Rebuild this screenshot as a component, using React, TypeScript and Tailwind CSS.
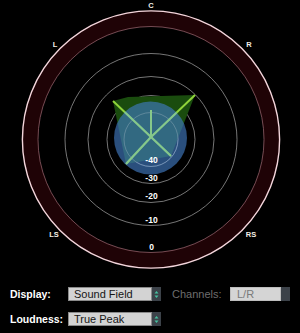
import React from "react";

const CX = 151;
const CY = 139.5;

function Field() {
  const rings = [27, 44, 63, 86];
  const labels: [string, number][] = [
    ["-40", 163],
    ["-30", 180.5],
    ["-20", 198.5],
    ["-10", 222.5],
    ["0", 249.5],
  ];
  const ends: [number, number][] = [
    [113, 101],
    [195, 95],
    [126, 164],
    [171, 156],
    [151, 110],
  ];
  return (
    <svg width={300} height={283} viewBox="0 0 300 283" className="block">
      <defs>
        <clipPath id="blueclip">
          <circle cx={150.5} cy={138} r={36.5} />
        </clipPath>
      </defs>
      <circle cx={CX} cy={CY} r={121} fill="none" stroke="#1f0306" strokeWidth={16} />
      <circle cx={CX} cy={CY} r={128.6} fill="none" stroke="#f3d6dc" strokeWidth={1.4} />
      <circle cx={CX} cy={CY} r={113} fill="none" stroke="#a06c76" strokeWidth={0.7} />
      {rings.map((r) => (
        <circle key={r} cx={CX} cy={CY} r={r} fill="none" stroke="#a8a8a8" strokeWidth={0.7} />
      ))}
      <polygon points="113,101 128,97 195,95 171,156 126,164" fill="#1a4c0e" />
      {ends.map(([x, y], i) => (
        <line key={i} x1={CX} y1={137} x2={x} y2={y} stroke="#8fd33a" strokeWidth={2} />
      ))}
      <circle cx={150.5} cy={138} r={36.5} fill="rgba(64,120,190,0.66)" />
      <circle cx={CX} cy={CY} r={27} fill="none" stroke="rgba(190,200,210,0.4)" strokeWidth={0.8} />
      <g clipPath="url(#blueclip)">
        {ends.map(([x, y], i) => (
          <line key={i} x1={CX} y1={137} x2={x} y2={y} stroke="#86c88a" strokeWidth={2} />
        ))}
      </g>
      {labels.map(([t, y]) => (
        <text
          key={t}
          x={151.5}
          y={y}
          textAnchor="middle"
          fill="#ffffff"
          fontSize={8.5}
          fontWeight="bold"
          fontFamily="'Liberation Sans', Arial, sans-serif"
        >
          {t}
        </text>
      ))}
      {(
        [
          ["C", 151, 7.5],
          ["L", 55, 47],
          ["R", 249, 47],
          ["LS", 54, 237],
          ["RS", 251, 237],
        ] as [string, number, number][]
      ).map(([t, x, y]) => (
        <text
          key={t}
          x={x}
          y={y}
          textAnchor="middle"
          fill="#f4f0e6"
          fontSize={7.5}
          fontWeight="bold"
          fontFamily="'Liberation Sans', Arial, sans-serif"
        >
          {t}
        </text>
      ))}
    </svg>
  );
}

function Arrows() {
  return (
    <svg width={5} height={9} viewBox="0 0 5 9">
      <polygon points="2.5,1 4.5,3.5 0.5,3.5" fill="#46c1a0" />
      <polygon points="2.5,8 4.5,5.5 0.5,5.5" fill="#46c1a0" />
    </svg>
  );
}

function Select({ text }: { text: string }) {
  return (
    <div className="flex h-[14px] w-[93px]">
      <div className="flex flex-1 items-center border border-[#8a8a8a] bg-[#d3d3d3] pl-[5px] text-[11px] leading-none text-[#151515]">
        {text}
      </div>
      <div className="flex w-[9px] items-center justify-center bg-[#3c4249]">
        <Arrows />
      </div>
    </div>
  );
}

export default function App() {
  return (
    <div
      className="h-[333px] w-[300px] overflow-hidden bg-black"
      style={{ fontFamily: "'Liberation Sans', Arial, sans-serif" }}
    >
      <Field />
      <div className="flex flex-col gap-[11px] pt-[4px]">
        <div className="flex h-[14px] items-center pl-[10px]">
          <div className="w-[58px] shrink-0 text-[10.5px] font-bold leading-none text-white">Display:</div>
          <Select text="Sound Field" />
          <div className="ml-[11px] w-[58px] text-[11px] leading-none text-[#6e6e6e]">Channels:</div>
          <div className="flex h-[14px] w-[60px]">
            <div className="flex flex-1 items-center border border-[#bdbdbd] bg-[#d5d5d5] pl-[6px] text-[11px] leading-none text-[#7a7a7a]">
              L/R
            </div>
            <div className="w-[9px] bg-[#3c4249]" />
          </div>
        </div>
        <div className="flex h-[14px] items-center pl-[10px]">
          <div className="w-[58px] shrink-0 text-[10.5px] font-bold leading-none text-white">Loudness:</div>
          <Select text="True Peak" />
        </div>
      </div>
    </div>
  );
}
